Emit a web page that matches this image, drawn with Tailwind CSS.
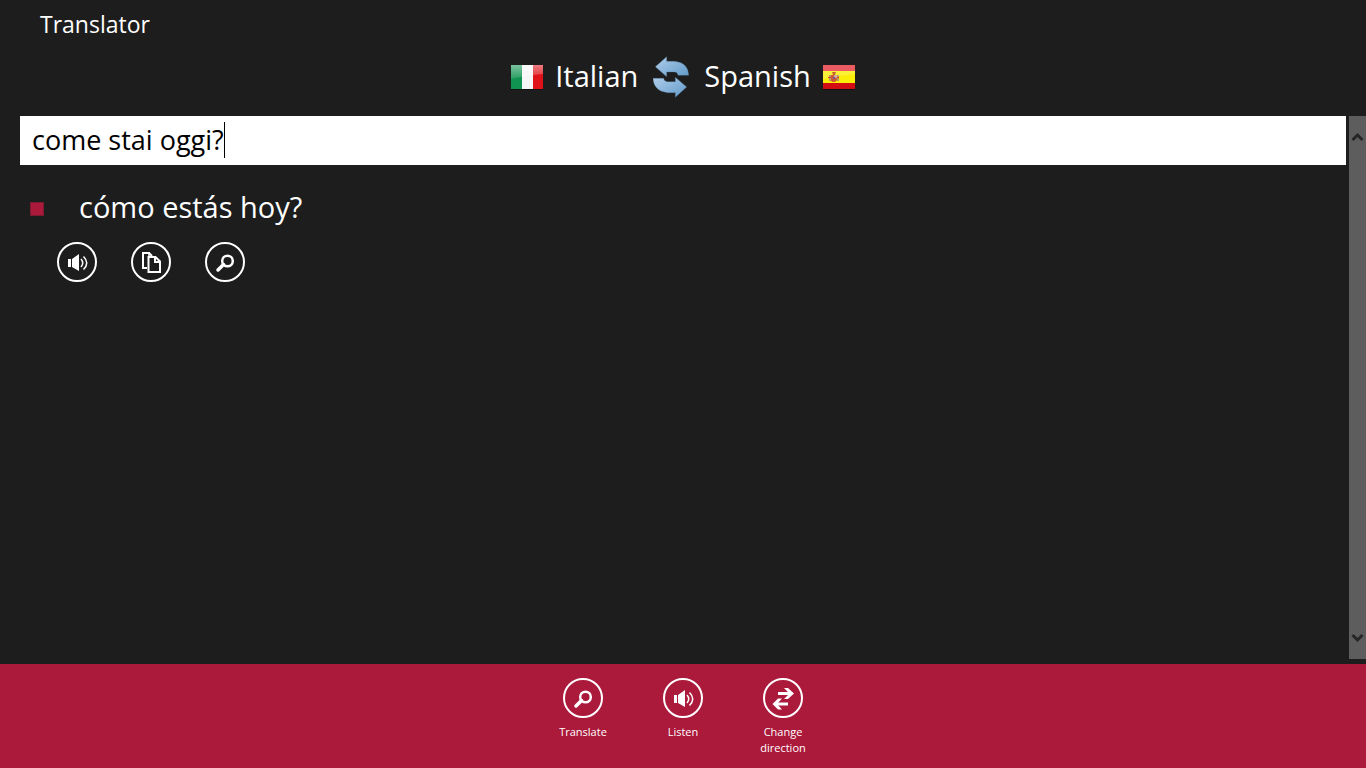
<!DOCTYPE html>
<html lang="en">
<head>
  <meta charset="UTF-8">
  <meta name="viewport" content="width=device-width, initial-scale=1">
  <title>Translator</title>
  <script src="https://cdn.jsdelivr.net/npm/@tailwindcss/browser@4"></script>
</head>
<body class="bg-[#1d1d1d] text-white font-['Open_Sans','Noto_Sans',sans-serif] h-screen flex flex-col overflow-hidden">
  <!-- Header -->
  <header class="px-10 h-12 flex items-center">
    <h1 class="text-[23px] leading-8">Translator</h1>
  </header>

  <!-- Language selection -->
  <div class="flex justify-center items-center h-[58px] mb-[10px]">
    <button class="flex items-center gap-3 text-[29px] leading-10">
      <svg class="w-8 h-[25px]" viewBox="0 0 32 25" aria-hidden="true">
        <defs>
          <linearGradient id="gloss" x1="0" y1="0" x2="0" y2="1">
            <stop offset="0" stop-color="#fff" stop-opacity=".45"/>
            <stop offset="1" stop-color="#fff" stop-opacity=".1"/>
          </linearGradient>
        </defs>
        <rect y="1" width="32" height="24" fill="#111"/>
        <rect width="11" height="24" fill="#109350"/>
        <rect x="11" width="11" height="24" fill="#f6f6f6"/>
        <rect x="22" width="10" height="24" fill="#df1119"/>
        <path d="M0 0H32V9Q16 10 0 14Z" fill="url(#gloss)"/>
      </svg>
      <span class="pb-[2px]">Italian</span>
    </button>
    <button class="mx-[15px]" aria-label="Swap languages">
      <svg class="w-9 h-[42px]" viewBox="26 14 108 126">
        <defs>
          <linearGradient id="swap" x1="0" y1="0" x2="1" y2="1">
            <stop offset="0" stop-color="#b0cdea"/>
            <stop offset="1" stop-color="#619bca"/>
          </linearGradient>
        </defs>
        <g fill="url(#swap)" stroke="#4d7396" stroke-width="1">
          <path d="M33 46L67 16V30H90Q131 33 133 72H101Q99 62 91 62H67V76Z"/>
          <path d="M127 107L93 138V124H70Q28 120 26 81H58Q60 91 69 91H93V78Z"/>
        </g>
      </svg>
    </button>
    <button class="flex items-center gap-3 text-[29px] leading-10">
      <span class="pb-[2px]">Spanish</span>
      <svg class="w-8 h-[25px]" viewBox="0 0 32 25" aria-hidden="true">
        <rect y="1" width="32" height="24" fill="#111"/>
        <rect width="32" height="24" fill="#d20d14"/>
        <rect y="6" width="32" height="12" fill="#fbee08"/>
        <rect width="32" height="6" fill="#ea5c61"/>
        <path d="M0 6H32V9Q16 10 0 14Z" fill="#fff" opacity=".2"/>
        <path d="M6 10H8V16H6ZM14 10H16V16H14Z" fill="#b3a06a"/>
        <path d="M5 12H8V13H5ZM14 12H16V13H14Z" fill="#d8401c"/>
        <path d="M8 10H14V15Q13 17 11 17Q8 17 8 15Z" fill="#d05a30"/>
        <path d="M11 10H14V13H11Z" fill="#d9a7a0"/>
        <path d="M9 7H13L12 10H10Z" fill="#c4682a"/>
        <rect x="10" y="12" width="2" height="2" fill="#6a5a90"/>
      </svg>
    </button>
  </div>

  <!-- Content -->
  <main class="flex flex-1 min-h-0 mb-[5px]">
    <div class="flex-1 pl-5 pr-[3px]">
      <label class="flex items-center bg-white text-black h-[49px] pl-3 pb-[2px] cursor-text">
        <input type="text" value="come stai oggi?" aria-label="Text to translate" class="field-sizing-content text-[27px] leading-9 outline-none">
        <span class="w-px h-9 bg-black"></span>
      </label>

      <ul class="pt-5">
        <li>
          <div class="flex items-center h-[46px] pl-[10px]">
            <span class="size-[14px] bg-[#ab193b] border border-[#7d1a31] mt-[2px]"></span>
            <p class="pl-[35px] pb-[2px] text-[29px] leading-10">cómo estás hoy?</p>
          </div>
          <div class="flex gap-[34px] pl-[37px] pt-[11px]">
            <button aria-label="Listen">
              <svg class="size-10" viewBox="0 0 40 40" fill="none" stroke="#fff">
                <circle cx="20" cy="20" r="19" stroke-width="2"/>
                <path d="M11 17H14V25H11ZM15 17L22 12V29L15 25Z" fill="#fff" stroke="none"/>
                <path d="M24 17Q27.500 21 24 25M26.500 14.500Q33 21 26.500 27.500" stroke-width="1.500"/>
              </svg>
            </button>
            <button aria-label="Copy">
              <svg class="size-10" viewBox="0 0 40 40" fill="none" stroke="#fff">
                <circle cx="20" cy="20" r="19" stroke-width="2"/>
                <path d="M16 26H12V11H18L21 14" stroke-width="2"/>
                <path d="M18 10V15" stroke-width="1.500"/>
                <path d="M17.500 15H24.500L29 19.500V30H17.500Z" stroke-width="2"/>
                <path d="M24 15V20H29" stroke-width="2"/>
              </svg>
            </button>
            <button aria-label="Search">
              <svg class="size-10" viewBox="0 0 40 40" fill="none" stroke="#fff">
                <circle cx="20" cy="20" r="19" stroke-width="2"/>
                <circle cx="22.500" cy="19" r="5.300" stroke-width="2.500"/>
                <path d="M18.500 22.500L13 28" stroke-width="3.500" stroke-linecap="round"/>
              </svg>
            </button>
          </div>
        </li>
      </ul>
    </div>

    <!-- Scrollbar -->
    <div class="w-[17px] bg-[#5d5d5d] flex flex-col justify-between py-4">
      <button aria-label="Scroll up" class="flex justify-center">
        <svg class="w-[13px] h-[10px]" viewBox="0 0 13 10" fill="none" stroke="#262626" stroke-width="3"><path d="M1.500 8L6.500 3L11.500 8"/></svg>
      </button>
      <button aria-label="Scroll down" class="flex justify-center">
        <svg class="w-[13px] h-[10px]" viewBox="0 0 13 10" fill="none" stroke="#262626" stroke-width="3"><path d="M1.500 2L6.500 7L11.500 2"/></svg>
      </button>
    </div>
  </main>

  <!-- App bar -->
  <footer class="bg-[#ab193b] h-[104px] pt-[14px] flex justify-center items-start">
    <button class="w-[100px] flex flex-col items-center gap-[6px] text-[11px] leading-4">
      <svg class="size-10" viewBox="0 0 40 40" fill="none" stroke="#fff">
        <circle cx="20" cy="20" r="19" stroke-width="2"/>
        <circle cx="22.500" cy="19" r="5.300" stroke-width="2.500"/>
        <path d="M18.500 22.500L13 28" stroke-width="3.500" stroke-linecap="round"/>
      </svg>
      <span>Translate</span>
    </button>
    <button class="w-[100px] flex flex-col items-center gap-[6px] text-[11px] leading-4">
      <svg class="size-10" viewBox="0 0 40 40" fill="none" stroke="#fff">
        <circle cx="20" cy="20" r="19" stroke-width="2"/>
        <path d="M11 17H14V25H11ZM15 17L22 12V29L15 25Z" fill="#fff" stroke="none"/>
        <path d="M24 17Q27.500 21 24 25M26.500 14.500Q33 21 26.500 27.500" stroke-width="1.500"/>
      </svg>
      <span>Listen</span>
    </button>
    <button class="w-[100px] flex flex-col items-center gap-[6px] text-[11px] leading-4">
      <svg class="size-10" viewBox="0 0 40 40" fill="none" stroke="#fff">
        <circle cx="20" cy="20" r="19" stroke-width="2"/>
        <path d="M15 15.500H28M25 26H12" stroke-width="3"/>
        <path d="M21 10H25L31 15.500L25 21H21L26.500 15.500ZM19 20.500H15L9.500 26L15 31.500H19L14 26Z" fill="#fff" stroke="none"/>
      </svg>
      <span>Change<br>direction</span>
    </button>
  </footer>
</body>
</html>
